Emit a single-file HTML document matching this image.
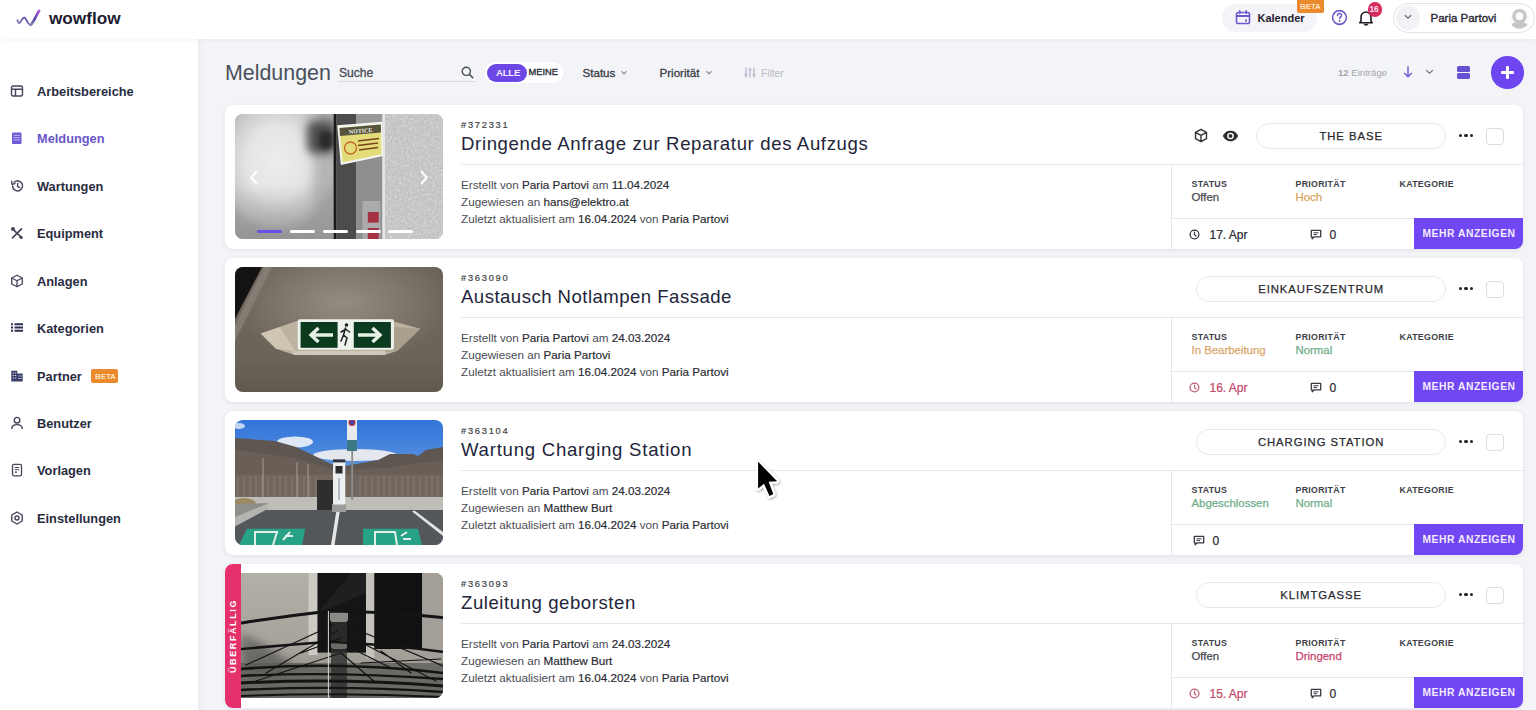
<!DOCTYPE html><html><head><meta charset="utf-8"><style>

*{box-sizing:border-box;margin:0;padding:0}
html,body{width:1536px;height:710px;overflow:hidden;background:#f3f4f8;font-family:"Liberation Sans",sans-serif;position:relative}
.a{position:absolute}
.t{position:absolute;white-space:nowrap;line-height:1}
#hdr{left:0;top:0;width:1536px;height:39px;background:#fff;box-shadow:0 1px 4px rgba(40,40,80,.05)}
#side{left:0;top:39px;width:198px;height:671px;background:#fff;box-shadow:2px 0 6px rgba(40,40,80,.045)}
.nav{left:37px;font-size:12.8px;font-weight:bold;color:#2a2c3f}
.nic{position:absolute;left:10px}
.card{position:absolute;left:225px;width:1298px;height:144.5px;background:#fff;border-radius:8px;box-shadow:0 1px 4px rgba(30,30,60,.09)}
.img{position:absolute;left:10px;top:9.5px;width:208px;height:125px;border-radius:8px;overflow:hidden}
.id{left:236px;top:16px;font-size:9.3px;color:#3e3e46;letter-spacing:1.75px;-webkit-text-stroke:.2px #3e3e46}
.ttl{left:236px;top:30.5px;font-size:18.6px;letter-spacing:.66px;color:#23253a}
.hr1{position:absolute;left:236px;top:59.5px;width:1062px;height:1px;background:#e6e7ec}
.vr{position:absolute;left:946px;top:59.5px;width:1px;height:85px;background:#e6e7ec}
.hr2{position:absolute;left:946px;top:113.5px;width:352px;height:1px;background:#e6e7ec}
.det{left:236px;font-size:11.7px;color:#4a4c55}
.det b{font-weight:normal;color:#2a2b33;-webkit-text-stroke:.18px #2a2b33}
.lbl{font-size:8.8px;font-weight:bold;color:#404048;letter-spacing:.3px;top:75px}
.val{font-size:11.4px;top:87.9px;-webkit-text-stroke:.25px}
.btn{position:absolute;left:1189px;top:113.5px;width:109px;height:31px;background:#7047f2;border-radius:0 0 8px 0;color:#f4ecff;font-size:10.3px;font-weight:bold;letter-spacing:.55px;text-align:center;line-height:31px;white-space:nowrap;padding-left:1px}
.pill{position:absolute;top:18px;height:26px;border:1.5px solid #e9e9ed;border-radius:13px;text-align:center;font-size:11.3px;letter-spacing:.95px;color:#2a2a30;line-height:25px;-webkit-text-stroke:.25px #2a2a30;white-space:nowrap}
.dots{position:absolute;left:1234px;top:29px;width:16px;height:4px}
.dots i{position:absolute;width:3.4px;height:3.4px;border-radius:50%;background:#222;top:0}
.chk{position:absolute;left:1261px;top:23.5px;width:17.5px;height:17px;border:1.5px solid #dcdce0;border-radius:4px}
.foot{top:124px;font-size:12px;color:#2a2a30;-webkit-text-stroke:.22px}

</style></head><body>
<div id="side" class="a"></div>

<div id="hdr" class="a"></div>
<svg class="a" style="left:16px;top:9px" width="26" height="19" viewBox="0 0 26 19">
 <defs><linearGradient id="lg" x1="0" y1="1" x2="1" y2="0"><stop offset="0" stop-color="#8c86b8"/><stop offset=".45" stop-color="#5648a8"/><stop offset="1" stop-color="#b955d6"/></linearGradient></defs>
 <path d="M1.3 11.1 C2 13.5 3 14.8 3.8 14 C5 12.5 6.5 8.5 8.3 8.6 C10 8.7 12.5 16.5 14.5 16.2 C16.5 15.8 21 5 23.1 1.8" fill="none" stroke="url(#lg)" stroke-width="1.7" stroke-linecap="round"/><path d="M14.8 15.6 C17 14 21 5 23.1 1.8" fill="none" stroke="url(#lg)" stroke-width="2.6" stroke-linecap="round"/>
</svg>
<div class="t" style="left:49px;top:10px;font-size:17.2px;font-weight:bold;color:#1c1d30">wowflow</div>

<div class="a" style="left:1222px;top:3.5px;width:95px;height:28.5px;border-radius:14px;background:#f4f4f8"></div>
<svg class="a" style="left:1235px;top:10px" width="16" height="15" viewBox="0 0 16 15"><rect x="1.5" y="2.5" width="13" height="11" rx="1.8" fill="none" stroke="#6b5bcf" stroke-width="1.6"/><path d="M1.5 6H14.5" stroke="#6b5bcf" stroke-width="2"/><path d="M4.8 0.8V3.5M11.2 0.8V3.5" stroke="#6b5bcf" stroke-width="1.6" stroke-linecap="round"/><rect x="10" y="9.5" width="2" height="2" fill="#6b5bcf"/></svg>
<div class="t" style="left:1257.5px;top:13px;font-size:11px;font-weight:bold;color:#1f2030">Kalender</div>
<div class="a" style="left:1297px;top:0;width:27px;height:13px;background:#eb8a2c;border-radius:0 0 2px 2px"></div>
<div class="t" style="left:1300px;top:2.5px;font-size:8px;font-weight:bold;color:#ffe2c0;letter-spacing:-.1px">BETA</div>

<svg class="a" style="left:1331px;top:9px" width="17" height="17" viewBox="0 0 17 17"><circle cx="8.5" cy="8.5" r="6.9" fill="none" stroke="#6c5dc8" stroke-width="1.6"/><path d="M6.5 6.6C6.5 5.3 7.4 4.6 8.5 4.6S10.5 5.3 10.5 6.5C10.5 7.9 8.6 8 8.6 9.6" fill="none" stroke="#6c5dc8" stroke-width="1.5" stroke-linecap="round"/><circle cx="8.6" cy="12" r=".95" fill="#6c5dc8"/></svg>
<svg class="a" style="left:1358px;top:9px" width="16" height="17" viewBox="0 0 16 17"><path d="M3 12.5V8A5 5 0 0 1 13 8V12.5L14.3 13.7H1.7Z" fill="none" stroke="#1d1d25" stroke-width="1.6" stroke-linejoin="round"/><path d="M6.2 14.8A1.9 1.9 0 0 0 9.8 14.8" fill="none" stroke="#1d1d25" stroke-width="1.5"/></svg>
<div class="a" style="left:1367.5px;top:2px;width:14.5px;height:14.5px;border-radius:50%;background:#d42c5c"></div>
<div class="t" style="left:1369.6px;top:5px;font-size:8.3px;font-weight:bold;color:#fde;letter-spacing:-.3px">16</div>

<div class="a" style="left:1392.5px;top:2.5px;width:142px;height:30.5px;border-radius:15.5px;border:1.3px solid #e3e3e7;background:#fff"></div>
<div class="a" style="left:1396px;top:5px;width:24px;height:25px;border-radius:50%;background:#f1f1f6"></div>
<svg class="a" style="left:1404px;top:14px" width="8" height="6" viewBox="0 0 8 6"><path d="M1.2 1.5L4 4.2L6.8 1.5" fill="none" stroke="#6a6a88" stroke-width="1.2" stroke-linecap="round"/></svg>
<div class="t" style="left:1430.5px;top:12.8px;font-size:11.5px;color:#2a2b36;-webkit-text-stroke:.4px #2a2b36">Paria Partovi</div>
<svg class="a" style="left:1509px;top:7.5px" width="21" height="21" viewBox="0 0 21 21"><defs><clipPath id="av"><circle cx="10.5" cy="10.5" r="10.2"/></clipPath></defs><circle cx="10.5" cy="10.5" r="10.2" fill="#fafafa"/><g clip-path="url(#av)"><circle cx="10.5" cy="8.2" r="5.6" fill="none" stroke="#c6c6c6" stroke-width="3.4"/><path d="M0 23C1 15 5 14 10.5 14S20 15 21 23Z" fill="#c6c6c6"/></g></svg>

<div class="t nav" style="top:86px">Arbeitsbereiche</div>
<div class="t nav" style="top:133px;color:#6a56c9">Meldungen</div>
<div class="t nav" style="top:181px">Wartungen</div>
<div class="t nav" style="top:228px">Equipment</div>
<div class="t nav" style="top:276px">Anlagen</div>
<div class="t nav" style="top:323px">Kategorien</div>
<div class="t nav" style="top:371px">Partner</div>
<div class="t nav" style="top:418px">Benutzer</div>
<div class="t nav" style="top:465px">Vorlagen</div>
<div class="t nav" style="top:513px">Einstellungen</div>
<div class="a" style="left:91px;top:369px;width:27px;height:14px;background:#eb8a2c;border-radius:2px"></div><div class="t" style="left:95px;top:372.5px;font-size:8px;font-weight:bold;color:#ffe2c0;letter-spacing:-.1px">BETA</div>
<svg class="nic" style="top:85px" width="14" height="12" viewBox="0 0 14 12"><rect x="1.5" y="1" width="11" height="10" rx="1.5" fill="none" stroke="#45475a" stroke-width="1.4"/><path d="M1.5 4.2H12.5M5.5 4.2V11" stroke="#45475a" stroke-width="1.4"/></svg>
<svg class="nic" style="top:132px" width="14" height="13" viewBox="0 0 14 13"><rect x="2" y="0.5" width="9.5" height="11.5" rx="1.2" fill="#6c5bd4"/><path d="M3.5 3.3H10M3.5 5.6H10M3.5 7.9H10" stroke="#c9c0f2" stroke-width=".9"/></svg>
<svg class="nic" style="top:179px" width="15" height="14" viewBox="0 0 15 14"><path d="M2.6 7A5 5 0 1 0 4.2 3.2" fill="none" stroke="#45475a" stroke-width="1.5" stroke-linecap="round"/><path d="M1.6 2.2L2 5.4L5.1 4.6" fill="none" stroke="#45475a" stroke-width="1.4" stroke-linecap="round" stroke-linejoin="round"/><path d="M7.6 4.2V7.3L9.6 8.6" fill="none" stroke="#45475a" stroke-width="1.4" stroke-linecap="round"/></svg>
<svg class="nic" style="top:226px" width="14" height="14" viewBox="0 0 14 14"><path d="M2.5 11.8L11.5 2.8M2.3 2.6L11.8 11.8" stroke="#45475a" stroke-width="1.7" stroke-linecap="round"/><circle cx="3" cy="3" r="2" fill="#45475a"/><circle cx="11" cy="11.3" r="1.6" fill="#45475a"/></svg>
<svg class="nic" style="top:274px" width="14" height="14" viewBox="0 0 14 14"><path d="M7 1.2L12.3 4V10L7 12.8L1.7 10V4Z M1.7 4L7 6.8L12.3 4 M7 6.8V12.8" fill="none" stroke="#45475a" stroke-width="1.3" stroke-linejoin="round"/></svg>
<svg class="nic" style="top:322px" width="14" height="12" viewBox="0 0 14 12"><path d="M1 2.2h2M1 5.5h2M1 8.8h2M4.5 2.2H13M4.5 5.5H13M4.5 8.8H13" stroke="#2d2f52" stroke-width="2.1"/></svg>
<svg class="nic" style="top:369px" width="14" height="14" viewBox="0 0 14 14"><path d="M1.3 12.5V1.8H7.3V4.5H12.7V12.5Z" fill="#3c3e6a"/><path d="M2.8 4h1.3M5 4h1.2M2.8 6.5h1.3M5 6.5h1.2M2.8 9h1.3M5 9h1.2M8.5 7h1.2M10.5 7h1.2M8.5 9.5h1.2M10.5 9.5h1.2" stroke="#dfe0f0" stroke-width="1"/></svg>
<svg class="nic" style="top:416px" width="14" height="14" viewBox="0 0 14 14"><circle cx="7" cy="4.2" r="2.8" fill="none" stroke="#45475a" stroke-width="1.4"/><path d="M1.8 13C1.8 9.6 4 8.6 7 8.6S12.2 9.6 12.2 13" fill="none" stroke="#45475a" stroke-width="1.4"/></svg>
<svg class="nic" style="top:463px" width="14" height="14" viewBox="0 0 14 14"><rect x="2.5" y="1.3" width="9" height="11.5" rx="1.6" fill="none" stroke="#45475a" stroke-width="1.3"/><path d="M4.8 4.5H9.2M4.8 6.8H9.2M4.8 9.1H7" stroke="#45475a" stroke-width="1.1"/></svg>
<svg class="nic" style="top:511px" width="14" height="14" viewBox="0 0 14 14"><path d="M7 1L12.2 4V10L7 13L1.8 10V4Z" fill="none" stroke="#45475a" stroke-width="1.4" stroke-linejoin="round"/><circle cx="7" cy="7" r="2" fill="none" stroke="#45475a" stroke-width="1.4"/></svg>

<div class="t" style="left:225px;top:63px;font-size:21.4px;color:#4a4f5a">Meldungen</div>
<div class="t" style="left:339px;top:67px;font-size:12.1px;color:#484a54;-webkit-text-stroke:.3px #484a54">Suche</div>
<div class="a" style="left:338px;top:80.5px;width:138px;height:1.3px;background:#d9dadf"></div>
<svg class="a" style="left:461px;top:66px" width="13" height="13" viewBox="0 0 13 13"><circle cx="5.3" cy="5.3" r="4.1" fill="none" stroke="#4a4c56" stroke-width="1.4"/><path d="M8.4 8.4L11.8 11.8" stroke="#4a4c56" stroke-width="1.5" stroke-linecap="round"/></svg>

<div class="a" style="left:484px;top:62px;width:80px;height:21px;border-radius:11px;background:#fff;box-shadow:0 0 2px rgba(0,0,0,.06)"></div>
<div class="a" style="left:487px;top:64px;width:40px;height:17.5px;border-radius:9px;background:#6c47e6"></div>
<div class="t" style="left:496px;top:68.3px;font-size:9.7px;font-weight:bold;color:#f1eaff;letter-spacing:-.3px">ALLE</div>
<div class="t" style="left:528.5px;top:68.3px;font-size:9.3px;color:#2e2f3a;-webkit-text-stroke:.35px #2e2f3a">MEINE</div>

<div class="t" style="left:582.5px;top:66.7px;font-size:11.6px;color:#383a46;-webkit-text-stroke:.3px #383a46">Status</div>
<svg class="a" style="left:620px;top:70px" width="8" height="6" viewBox="0 0 8 6"><path d="M1.8 1.6L4 3.8L6.2 1.6" fill="none" stroke="#7a7c88" stroke-width="1.1" stroke-linecap="round"/></svg>
<div class="t" style="left:659.5px;top:66.7px;font-size:11.6px;color:#383a46;-webkit-text-stroke:.3px #383a46">Priorität</div>
<svg class="a" style="left:705px;top:70px" width="8" height="6" viewBox="0 0 8 6"><path d="M1.8 1.6L4 3.8L6.2 1.6" fill="none" stroke="#7a7c88" stroke-width="1.1" stroke-linecap="round"/></svg>
<svg class="a" style="left:744px;top:67px" width="12" height="11" viewBox="0 0 12 11"><path d="M2 0.5V10.5M6 0.5V10.5M10 0.5V10.5" stroke="#b9b9cb" stroke-width="1.3"/><path d="M0.5 7.5H3.5M4.5 3H7.5M8.5 7.5H11.5" stroke="#b9b9cb" stroke-width="1.6"/></svg>
<div class="t" style="left:761px;top:68.5px;font-size:10.2px;color:#b9bac4">Filter</div>

<div class="t" style="left:1338px;top:68px;font-size:9.6px;color:#a5a6ae"><b>12</b> Einträge</div>
<svg class="a" style="left:1403px;top:66px" width="10" height="12" viewBox="0 0 10 12"><path d="M5 0.8V10.5M1.5 7.2L5 10.7L8.5 7.2" fill="none" stroke="#6d5bd0" stroke-width="1.4" stroke-linecap="round" stroke-linejoin="round"/></svg>
<svg class="a" style="left:1425px;top:69px" width="9" height="6" viewBox="0 0 9 6"><path d="M1.5 1.5L4.5 4.3L7.5 1.5" fill="none" stroke="#7a7a90" stroke-width="1.2" stroke-linecap="round"/></svg>
<div class="a" style="left:1457px;top:66px;width:13px;height:5.6px;border-radius:1.5px;background:#6650d2"></div>
<div class="a" style="left:1457px;top:73.2px;width:13px;height:5.6px;border-radius:1.5px;background:#6650d2"></div>
<div class="a" style="left:1491px;top:56px;width:32.5px;height:32.5px;border-radius:50%;background:#6d46f0"></div>
<div class="a" style="left:1501px;top:70.8px;width:12.5px;height:2.8px;background:#fff;border-radius:1px"></div>
<div class="a" style="left:1505.85px;top:66px;width:2.8px;height:12.5px;background:#fff;border-radius:1px"></div>

<div class="card" style="top:104.5px">
<div class="img" style="background:#b4b4b4">
<svg class="a" style="left:0;top:0" width="208" height="125" viewBox="0 0 208 125">
<defs>
<radialGradient id="g1a" cx="42" cy="48" r="62" gradientUnits="userSpaceOnUse" gradientTransform="translate(42 48) scale(1 1.15) translate(-42 -48)"><stop offset="0" stop-color="#eeeeee"/><stop offset=".5" stop-color="#e4e4e4"/><stop offset=".85" stop-color="#c6c6c6"/><stop offset="1" stop-color="#acacac"/></radialGradient>
<linearGradient id="g1b" x1="0" y1="0" x2="0" y2="1"><stop offset="0" stop-color="#8a8a8a" stop-opacity="0"/><stop offset="1" stop-color="#808080" stop-opacity=".55"/></linearGradient>
<filter id="bl6" x="-100%" y="-100%" width="300%" height="300%"><feGaussianBlur stdDeviation="5"/></filter>
<filter id="bl3" x="-100%" y="-100%" width="300%" height="300%"><feGaussianBlur stdDeviation="2.5"/></filter>
<filter id="nz" x="0" y="0" width="100%" height="100%"><feTurbulence type="fractalNoise" baseFrequency=".45" numOctaves="2" seed="3"/><feColorMatrix type="matrix" values="0 0 0 0 .86  0 0 0 0 .86  0 0 0 0 .86  0 0 0 1.8 -.7"/></filter>
</defs>
<rect x="0" y="0" width="98" height="125" fill="url(#g1a)"/>
<rect x="0" y="70" width="98" height="55" fill="url(#g1b)"/>
<rect x="78" y="35" width="20" height="90" fill="#9a9a9a" opacity=".45" filter="url(#bl6)"/>
<rect x="72" y="6" width="28" height="34" rx="8" fill="#505050" filter="url(#bl6)"/>
<rect x="84" y="17" width="14" height="18" rx="5" fill="#2a2a2a" filter="url(#bl3)"/>
<rect x="98.6" y="0" width="2.8" height="125" fill="#1a1a1a"/>
<rect x="101.3" y="0" width="19.8" height="125" fill="#4c4c4c"/>
<rect x="121.1" y="0" width="26.2" height="125" fill="#8e8e8e"/>
<rect x="121.1" y="0" width="26.2" height="20" fill="#999"/>
<rect x="147.3" y="0" width="2.8" height="125" fill="#e4e4e4"/>
<rect x="150" y="0" width="58" height="125" fill="#c2c2c2"/>
<rect x="150" y="0" width="58" height="125" filter="url(#nz)" opacity=".6"/>
<polygon points="102.2,11.3 147.3,7.7 148.2,42 105.8,51" fill="#f3f3ef"/>
<polygon points="104.6,14 145.8,10.5 146.5,40.2 107.6,48.2" fill="#e2dd78"/>
<polygon points="104.6,14 145.8,10.5 146,18.5 104.9,22" fill="#56553c"/>
<text x="114" y="20" font-family="Liberation Serif" font-size="6" font-weight="bold" fill="#f0f0e8" transform="rotate(-5 114 20)">NOTICE</text>
<circle cx="115.5" cy="34" r="6" fill="none" stroke="#c4662a" stroke-width="1.3"/>
<path d="M123 27L144 24.5M123 31.5L143 29M124 36L143 33.5" stroke="#7a4020" stroke-width="1.6"/>
<rect x="127.4" y="87" width="18" height="38" fill="#ababab"/>
<rect x="132.8" y="98" width="11" height="10.6" fill="#a53243"/>
<rect x="132.8" y="114" width="11" height="11" fill="#a53243"/>
</svg>
<svg class="a" style="left:14px;top:56px" width="10" height="15" viewBox="0 0 10 15"><path d="M7.5 1.5L2.3 7.5L7.5 13.5" fill="none" stroke="#fff" stroke-width="2" stroke-linecap="round" stroke-linejoin="round"/></svg>
<svg class="a" style="left:184px;top:56px" width="10" height="15" viewBox="0 0 10 15"><path d="M2.5 1.5L7.7 7.5L2.5 13.5" fill="none" stroke="#fff" stroke-width="2" stroke-linecap="round" stroke-linejoin="round"/></svg>
<div class="a" style="left:21.5px;top:116px;width:25.5px;height:3px;border-radius:1.5px;background:#6b4ee6"></div>
<div class="a" style="left:55px;top:116px;width:25px;height:3px;border-radius:1.5px;background:#fff"></div>
<div class="a" style="left:88px;top:116px;width:25px;height:3px;border-radius:1.5px;background:#fff"></div>
<div class="a" style="left:120.5px;top:116px;width:25px;height:3px;border-radius:1.5px;background:#fff"></div>
<div class="a" style="left:153px;top:116px;width:25px;height:3px;border-radius:1.5px;background:#fff"></div>
</div>
<div class="t id">#372331</div>
<div class="t ttl" style="letter-spacing:0.63px">Dringende Anfrage zur Reparatur des Aufzugs</div>
<div class="hr1"></div><div class="vr"></div><div class="hr2"></div>
<div class="t det" style="top:74px">Erstellt von <b>Paria Partovi</b> am <b>11.04.2024</b></div>
<div class="t det" style="top:91px">Zugewiesen an <b>hans@elektro.at</b></div>
<div class="t det" style="top:108px">Zuletzt aktualisiert am <b>16.04.2024</b> von <b>Paria Partovi</b></div>
<svg class="a" style="left:969px;top:23.5px" width="14" height="15" viewBox="0 0 14 15"><path d="M7 1.3L12.5 4.3V10.7L7 13.7L1.5 10.7V4.3Z M1.5 4.3L7 7.3L12.5 4.3 M7 7.3V13.7" fill="none" stroke="#333" stroke-width="1.4" stroke-linejoin="round"/></svg>
<svg class="a" style="left:997px;top:25.5px" width="17" height="12" viewBox="0 0 17 12"><path d="M0.8 6C3 2 5.5 0.8 8.5 0.8S14 2 16.2 6C14 10 11.5 11.2 8.5 11.2S3 10 0.8 6Z" fill="#2e2e2e"/><circle cx="8.5" cy="6" r="3.3" fill="#fff"/><circle cx="8.5" cy="6" r="1.9" fill="#2e2e2e"/></svg>
<div class="pill" style="left:1031px;width:190.29999999999995px">THE BASE</div>
<div class="dots"><i style="left:0"></i><i style="left:5.3px"></i><i style="left:10.6px"></i></div>
<div class="chk"></div>
<div class="t lbl" style="left:966.5px">STATUS</div><div class="t lbl" style="left:1070.5px">PRIORITÄT</div><div class="t lbl" style="left:1174.5px">KATEGORIE</div>
<div class="t val" style="left:966.5px;color:#4a4a52">Offen</div>
<div class="t val" style="left:1070.5px;color:#d9a35c">Hoch</div>
<svg class="a" style="left:964px;top:124px" width="11" height="11" viewBox="0 0 11 11"><circle cx="5.5" cy="5.5" r="4.4" fill="none" stroke="#3a3a44" stroke-width="1.3"/><path d="M5.5 3V5.8L7 7" fill="none" stroke="#3a3a44" stroke-width="1.2" stroke-linecap="round"/></svg>
<div class="t foot" style="left:984.5px;color:#2a2a30">17. Apr</div>
<svg class="a" style="left:1084.5px;top:124.5px" width="12" height="11" viewBox="0 0 12 11"><path d="M1.3 1.3H10.7V7.8H4.2L2.2 9.8V7.8H1.3Z" fill="none" stroke="#3a3a44" stroke-width="1.3" stroke-linejoin="round"/><path d="M3.5 3.8H8.5M3.5 5.6H7" stroke="#3a3a44" stroke-width="1"/></svg>
<div class="t foot" style="left:1104.5px">0</div>
<div class="btn">MEHR ANZEIGEN</div>
</div>
<div class="card" style="top:257.5px">
<div class="img" style="background:radial-gradient(ellipse 110px 60px at 108px 36px,#928c83 0%,#7f776c 55%,#6c6458 100%)">
<svg class="a" style="left:0;top:0" width="208" height="125" viewBox="0 0 208 125">
<polygon points="0,0 27,0 0,52" fill="#141312"/>
<polygon points="29,0 37,0 0,74 0,58" fill="#8a857c" opacity=".7"/>
<polygon points="25.7,66.5 61.8,54 156.8,54 185.3,61.8 162.5,83.7 151,87.5 58,87.5 40.9,81.7" fill="#bcb29f"/>
<polygon points="25.7,66.5 45,60 60,84 40.9,81.7" fill="#d6cdbb" opacity=".7"/>
<polygon points="160,60 185.3,61.8 162.5,83.7 150,85" fill="#a59a87" opacity=".8"/>
<rect x="58" y="84" width="93" height="4" rx="2" fill="#d0c9ba"/>
<rect x="62.7" y="52.3" width="96.2" height="30.4" rx="2" fill="#eef2ec"/>
<rect x="65.6" y="55" width="37" height="25.8" fill="#0b3a1e"/>
<rect x="118.8" y="55" width="37.1" height="25.8" fill="#0b3a1e"/>
<path d="M98 68H76M83.5 61L76 68L83.5 75" fill="none" stroke="#e6f1e4" stroke-width="3.4"/>
<path d="M123 68H145M137.5 61L145 68L137.5 75" fill="none" stroke="#e6f1e4" stroke-width="3.4"/>
<circle cx="111.5" cy="58" r="1.8" fill="#1c1c1c"/>
<path d="M110.5 61L108.5 68L112 71L110 78M108.5 68L106 74M110.5 62L114.5 65M109.5 63L106 65" fill="none" stroke="#1c1c1c" stroke-width="1.5" stroke-linecap="round"/>
</svg>
<div class="a" style="left:0;top:90px;width:208px;height:35px;background:linear-gradient(180deg,rgba(60,55,45,0),rgba(60,55,45,.25))"></div>
</div>
<div class="t id">#363090</div>
<div class="t ttl" style="letter-spacing:0.46px">Austausch Notlampen Fassade</div>
<div class="hr1"></div><div class="vr"></div><div class="hr2"></div>
<div class="t det" style="top:74px">Erstellt von <b>Paria Partovi</b> am <b>24.03.2024</b></div>
<div class="t det" style="top:91px">Zugewiesen an <b>Paria Partovi</b></div>
<div class="t det" style="top:108px">Zuletzt aktualisiert am <b>16.04.2024</b> von <b>Paria Partovi</b></div>
<div class="pill" style="left:971px;width:250.29999999999995px">EINKAUFSZENTRUM</div>
<div class="dots"><i style="left:0"></i><i style="left:5.3px"></i><i style="left:10.6px"></i></div>
<div class="chk"></div>
<div class="t lbl" style="left:966.5px">STATUS</div><div class="t lbl" style="left:1070.5px">PRIORITÄT</div><div class="t lbl" style="left:1174.5px">KATEGORIE</div>
<div class="t val" style="left:966.5px;color:#dba76a">In Bearbeitung</div>
<div class="t val" style="left:1070.5px;color:#6fae8a">Normal</div>
<svg class="a" style="left:964px;top:124px" width="11" height="11" viewBox="0 0 11 11"><circle cx="5.5" cy="5.5" r="4.4" fill="none" stroke="#c2607a" stroke-width="1.3"/><path d="M5.5 3V5.8L7 7" fill="none" stroke="#c2607a" stroke-width="1.2" stroke-linecap="round"/></svg>
<div class="t foot" style="left:984.5px;color:#c2496a">16. Apr</div>
<svg class="a" style="left:1084.5px;top:124.5px" width="12" height="11" viewBox="0 0 12 11"><path d="M1.3 1.3H10.7V7.8H4.2L2.2 9.8V7.8H1.3Z" fill="none" stroke="#3a3a44" stroke-width="1.3" stroke-linejoin="round"/><path d="M3.5 3.8H8.5M3.5 5.6H7" stroke="#3a3a44" stroke-width="1"/></svg>
<div class="t foot" style="left:1104.5px">0</div>
<div class="btn">MEHR ANZEIGEN</div>
</div>
<div class="card" style="top:410.5px">
<div class="img" style="background:linear-gradient(180deg,#3274d8 0%,#4382dc 18%,#5e96dd 40%,#6d9cd8 55%)">
<svg class="a" style="left:0;top:0" width="208" height="125" viewBox="0 0 208 125">
<ellipse cx="60" cy="22" rx="18" ry="5.5" fill="#eef2f8" opacity=".9"/>
<ellipse cx="4" cy="6" rx="6" ry="3" fill="#e8eef8" opacity=".8"/>
<ellipse cx="120" cy="35" rx="42" ry="6" fill="#e4e8ee"/>
<polygon points="0,18 40,21 61,27 82,37 96,44 110,46 143,40 155,34 178,34 183,36 191,30 208,27 208,58 0,58" fill="#5e5650"/>
<polygon points="0,30 60,38 100,50 150,48 208,40 208,58 0,58" fill="#6a5f57"/>
<rect x="0" y="55" width="208" height="22" fill="#72675f"/>
<g stroke="#a39a92" stroke-width=".7" opacity=".6">
<path d="M3 56V77M9 56V77M15 56V77M21 56V77M27 56V77M33 56V77M39 56V77M45 56V77M51 56V77M57 56V77M63 56V77M69 56V77M75 56V77M81 56V77"/>
<path d="M125 56V77M131 56V77M137 56V77M143 56V77M149 56V77M155 56V77M161 56V77M167 56V77M173 56V77M179 56V77M185 56V77M191 56V77M197 56V77M203 56V77"/>
</g>
<path d="M28 38V77M62 42V77M73 44V77" stroke="#a89e94" stroke-width="1"/>
<rect x="0" y="77" width="208" height="13" fill="#bebdb8"/>
<rect x="82" y="60" width="16" height="31" fill="#2e2e2e"/>
<ellipse cx="9" cy="84" rx="12" ry="6" fill="#9c8a62"/>
<rect x="0" y="90" width="208" height="35" fill="#54575a"/>
<polygon points="0,84 33,83 33,89 0,97" fill="#8e8e8a"/><polygon points="0,97 33,83.4 33,88.8 0,106.6" fill="#b4b4b0"/>
<polygon points="101.5,90 105,90 99.5,125 96,125" fill="#e6e6e6"/>
<polygon points="177,91.5 179.5,90.5 208,112 208,116" fill="#e2e2e2"/>
<polygon points="12,108.7 70.3,108.7 67,125 4,125" fill="#26a386"/>
<polygon points="128,108.7 183,108.7 187,125 128,125" fill="#26a386"/>
<path d="M20 125V112H42L38 125M48 120L55 112M50 116H58" fill="none" stroke="#e4efe9" stroke-width="2"/>
<path d="M140 125V112H160L162 125M166 116L172 112M168 119H176" fill="none" stroke="#e4efe9" stroke-width="2"/>
<rect x="112" y="0" width="10" height="20" fill="#e8eaec"/>
<circle cx="117" cy="2.5" r="3.5" fill="#c03040"/><circle cx="117" cy="2.5" r="2.2" fill="#3a4aa0"/>
<rect x="112" y="20" width="10" height="11" fill="#3d7887"/>
<rect x="116.3" y="31" width="1.8" height="49" fill="#8c8c8c"/>
<rect x="97" y="84" width="14" height="8" fill="#9c9c9c"/>
<rect x="98" y="39.4" width="12.3" height="45" rx="1.5" fill="#eceef0"/>
<rect x="98" y="39.4" width="12.3" height="3" fill="#2a3440"/>
<rect x="100.5" y="46" width="7" height="7.5" fill="#2a2a2a"/>
<path d="M104 58V80" stroke="#8a9ab0" stroke-width="1.2"/>
</svg>
</div>
<div class="t id">#363104</div>
<div class="t ttl" style="letter-spacing:0.75px">Wartung Charging Station</div>
<div class="hr1"></div><div class="vr"></div><div class="hr2"></div>
<div class="t det" style="top:74px">Erstellt von <b>Paria Partovi</b> am <b>24.03.2024</b></div>
<div class="t det" style="top:91px">Zugewiesen an <b>Matthew Burt</b></div>
<div class="t det" style="top:108px">Zuletzt aktualisiert am <b>16.04.2024</b> von <b>Paria Partovi</b></div>
<div class="pill" style="left:971px;width:250.29999999999995px">CHARGING STATION</div>
<div class="dots"><i style="left:0"></i><i style="left:5.3px"></i><i style="left:10.6px"></i></div>
<div class="chk"></div>
<div class="t lbl" style="left:966.5px">STATUS</div><div class="t lbl" style="left:1070.5px">PRIORITÄT</div><div class="t lbl" style="left:1174.5px">KATEGORIE</div>
<div class="t val" style="left:966.5px;color:#6fae8a">Abgeschlossen</div>
<div class="t val" style="left:1070.5px;color:#6fae8a">Normal</div>
<svg class="a" style="left:967.5px;top:124.5px" width="12" height="11" viewBox="0 0 12 11"><path d="M1.3 1.3H10.7V7.8H4.2L2.2 9.8V7.8H1.3Z" fill="none" stroke="#3a3a44" stroke-width="1.3" stroke-linejoin="round"/><path d="M3.5 3.8H8.5M3.5 5.6H7" stroke="#3a3a44" stroke-width="1"/></svg>
<div class="t foot" style="left:987.5px">0</div>
<div class="btn">MEHR ANZEIGEN</div>
</div>
<div class="card" style="top:563.5px">
<div class="img" style="left:16px;width:202px;border-radius:0 8px 8px 0;background:#8e8b84">
<svg class="a" style="left:0;top:0" width="202" height="125" viewBox="0 0 202 125">
<defs><linearGradient id="w4" x1="0" y1="0" x2="0" y2="1"><stop offset="0" stop-color="#b2afa6"/><stop offset=".6" stop-color="#a6a39b"/><stop offset="1" stop-color="#8e8b84"/></linearGradient>
<filter id="b4" x="-50%" y="-50%" width="200%" height="200%"><feGaussianBlur stdDeviation="4"/></filter></defs>
<rect x="0" y="0" width="202" height="125" fill="url(#w4)"/>
<polygon points="0,60 30,75 55,95 40,105 0,100" fill="#4a4844" opacity=".6" filter="url(#b4)"/>
<rect x="67.5" y="0" width="9" height="82" fill="#cdcac3"/>
<rect x="76.5" y="0" width="48.5" height="79.6" fill="#151515"/>
<polygon points="76.5,40 110,0 125,0 125,20" fill="#222" opacity=".8"/>
<rect x="125" y="0" width="8.3" height="85" fill="#c6c3bc"/>
<rect x="133.3" y="0" width="47.7" height="76" fill="#111"/>
<rect x="181" y="0" width="21" height="85" fill="#a39f98"/>
<rect x="0" y="90" width="202" height="35" fill="#5c5b57" opacity=".75"/>
<rect x="90" y="45" width="16" height="80" fill="#2e2e2e" opacity=".8"/>
<rect x="89" y="37" width="18" height="12" rx="3" fill="#8a8a86"/>
<rect x="90" y="68" width="16" height="8" rx="3" fill="#6a6a66"/>
<g fill="none" stroke="#141414" stroke-linecap="round">
<path d="M0.8 50 Q45 43 89 38 Q150 39 201 44.5" stroke-width="3"/>
<path d="M0.8 76 Q45 72 89 68.8 Q150 72 201 78.7" stroke-width="2.6"/>
<path d="M0 96 Q100 88 202 100" stroke-width="2.6"/>
<path d="M0 103 Q90 98 202 106" stroke-width="2.4"/>
<path d="M0 110 Q100 105 202 113" stroke-width="3"/>
<path d="M0 117 Q100 112 202 119" stroke-width="2.4"/>
<path d="M0 123 Q100 119 202 124" stroke-width="2"/>
<path d="M5 92 L92 52 M25 100 L96 58 M112 55 L202 93 M125 72 L195 108 M140 78 L170 100 M15 108 L100 80 M110 75 L150 95 M60 80 L100 65 M120 90 L200 86 M100 80 L135 110" stroke-width="1.2"/>
</g>
<path d="M87.4 38 V125" stroke="#d8d8d4" stroke-width="1"/>
</svg>
</div>
<div class="a" style="left:0;top:0;width:16px;height:144.5px;background:#e5306b;border-radius:8px 0 0 8px"></div>
<div class="t" style="left:8px;top:72px;transform:translate(-50%,-50%) rotate(-90deg);font-size:9px;font-weight:bold;color:#fff;letter-spacing:1.6px">ÜBERFÄLLIG</div>
<div class="t id">#363093</div>
<div class="t ttl" style="letter-spacing:0.55px">Zuleitung geborsten</div>
<div class="hr1"></div><div class="vr"></div><div class="hr2"></div>
<div class="t det" style="top:74px">Erstellt von <b>Paria Partovi</b> am <b>24.03.2024</b></div>
<div class="t det" style="top:91px">Zugewiesen an <b>Matthew Burt</b></div>
<div class="t det" style="top:108px">Zuletzt aktualisiert am <b>16.04.2024</b> von <b>Paria Partovi</b></div>
<div class="pill" style="left:971px;width:250.29999999999995px">KLIMTGASSE</div>
<div class="dots"><i style="left:0"></i><i style="left:5.3px"></i><i style="left:10.6px"></i></div>
<div class="chk"></div>
<div class="t lbl" style="left:966.5px">STATUS</div><div class="t lbl" style="left:1070.5px">PRIORITÄT</div><div class="t lbl" style="left:1174.5px">KATEGORIE</div>
<div class="t val" style="left:966.5px;color:#4a4a52">Offen</div>
<div class="t val" style="left:1070.5px;color:#c8466c">Dringend</div>
<svg class="a" style="left:964px;top:124px" width="11" height="11" viewBox="0 0 11 11"><circle cx="5.5" cy="5.5" r="4.4" fill="none" stroke="#c2607a" stroke-width="1.3"/><path d="M5.5 3V5.8L7 7" fill="none" stroke="#c2607a" stroke-width="1.2" stroke-linecap="round"/></svg>
<div class="t foot" style="left:984.5px;color:#c2496a">15. Apr</div>
<svg class="a" style="left:1084.5px;top:124.5px" width="12" height="11" viewBox="0 0 12 11"><path d="M1.3 1.3H10.7V7.8H4.2L2.2 9.8V7.8H1.3Z" fill="none" stroke="#3a3a44" stroke-width="1.3" stroke-linejoin="round"/><path d="M3.5 3.8H8.5M3.5 5.6H7" stroke="#3a3a44" stroke-width="1"/></svg>
<div class="t foot" style="left:1104.5px">0</div>
<div class="btn">MEHR ANZEIGEN</div>
</div>
<svg class="a" style="left:754px;top:459px" width="30" height="44" viewBox="0 0 30 44"><defs><filter id="cs" x="-50%" y="-50%" width="200%" height="200%"><feDropShadow dx=".8" dy="1.2" stdDeviation="1" flood-opacity=".35"/></filter></defs><path d="M4.1 2.8 L4.1 29.4 L10 24.8 L15.5 37 L19.3 34.9 L14.6 22.7 L23.1 22.2 Z" fill="#fff" stroke="#fff" stroke-width="4.6" stroke-linejoin="round" filter="url(#cs)"/><path d="M4.1 2.8 L4.1 29.4 L10 24.8 L15.5 37 L19.3 34.9 L14.6 22.7 L23.1 22.2 Z" fill="#000"/></svg>
</body></html>
